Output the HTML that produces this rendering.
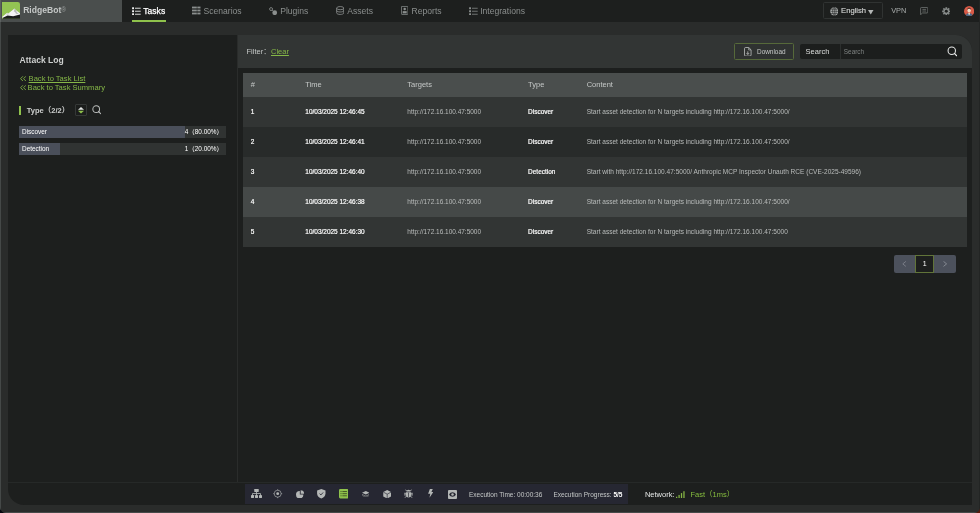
<!DOCTYPE html>
<html lang="en">
<head>
<meta charset="utf-8">
<title>RidgeBot - Attack Log</title>
<style>
*{box-sizing:border-box;margin:0;padding:0}
html,body{width:980px;height:513px;overflow:hidden;background:#2a2c2b}
body{position:relative;font-family:"Liberation Sans",sans-serif;color:#d6d8d7;-webkit-font-smoothing:antialiased}
.abs{position:absolute}
.t{position:absolute;white-space:nowrap;line-height:1}
/* window frame */
#win{will-change:transform;position:absolute;left:0;top:0;width:980px;height:513px;background:#2a2c2b;border-radius:0 0 6px 6px;overflow:hidden}
#edgeL{position:absolute;left:0;top:0;width:1.2px;height:513px;background:linear-gradient(to bottom,#5d6160 0,#5d6160 22px,#454948 22px)}
#edgeR{position:absolute;left:979px;top:0;width:1px;height:513px;background:#232524}
#edgeB{position:absolute;left:0;top:512px;width:980px;height:1px;background:#464a49}
#cornerL{position:absolute;left:0;top:507px;width:6px;height:6px;background:#05080f}
#cornerR{position:absolute;left:974px;top:507px;width:6px;height:6px;background:#5a1a0c}
/* header */
#hdr{position:absolute;left:0;top:0;width:980px;height:22px;background:#1d1f1e}
#logo{position:absolute;left:0;top:0;width:121.5px;height:22px;background:#4a4e4d}
#logoimg{position:absolute;left:1.9px;top:1.9px;width:18px;height:17px}
#brand{left:23.2px;top:5.7px;font-size:8.57px;font-weight:bold;color:#c5c8c7}
.nav{font-size:8.57px;color:#8b8f8e;top:6.6px}
.nav.on{color:#fff;-webkit-text-stroke:0.25px #fff}
#uline{position:absolute;left:132px;top:20px;width:33.5px;height:2px;background:#8fc24c}
/* container */
#box{position:absolute;left:8px;top:35px;width:963.6px;height:469.6px;background:#1d1f1e;border-radius:0 16px 0 16px;overflow:hidden}
#vdiv{position:absolute;left:228.5px;top:0;width:1px;height:447.5px;background:#2a2c2b}
#hdiv{position:absolute;left:0;top:447px;width:964px;height:1px;background:#262928}
#fbar{position:absolute;left:228.6px;top:0;width:735.4px;height:33px;background:#323534}
/* left */
#ttl{left:11.5px;top:20.6px;font-size:8.57px;font-weight:bold;color:#cdcfce}
.lnk{font-size:7.58px;color:#85b747}
.lnk u{text-decoration-thickness:0.6px;text-underline-offset:0.8px}
.bar{position:absolute;left:11px;width:207px;height:12px;background:#303332}
.cj{font-family:"Liberation Sans","Noto Sans CJK SC",sans-serif}
.bar i{position:absolute;left:0;top:0;height:100%;background:#4a4f5a;display:block}
.bar span{position:absolute;top:2.9px;font-size:6.43px;color:#fff;line-height:1;white-space:nowrap}
/* table */
#tbl{position:absolute;left:234.5px;top:37.6px;width:724.4px}
.row{position:absolute;left:0;width:724.4px;height:30px}
.row span{top:12.3px;position:absolute;white-space:nowrap;line-height:1;font-size:6.48px}
.c1{left:8.3px;color:#fff;-webkit-text-stroke:0.18px #fff}
.c2{left:62.8px;color:#fff;-webkit-text-stroke:0.18px #fff}
.c3{left:164.8px;color:#b9bcbb}
.c4{left:285.6px;color:#fff;-webkit-text-stroke:0.18px #fff}
.c5{left:344.2px;color:#b9bcbb;font-size:6.54px !important}
#th{position:absolute;left:0;top:0;width:724.4px;height:24.4px;background:#4a4e4d}
#th span{position:absolute;white-space:nowrap;line-height:1;font-size:7.5px;color:#c5c8c7;top:8.2px}
#pg{position:absolute;left:885.8px;top:220.2px;width:62.2px;height:17.6px;background:#4c515c;border-radius:2px}
#pgc{position:absolute;left:21.2px;top:0;width:19.1px;height:17.6px;background:#1d1f1e;border:1px solid #617439}
.bt{font-size:6.5px;color:#c5c8c7}
.bt b{color:#fff}
</style>
</head>
<body>
<div id="cornerL"></div><div id="cornerR"></div>
<div id="win">
  <div id="hdr">
    <div id="logo">
      <svg id="logoimg" viewBox="0 0 180 170">
        <path d="M0 0H158A22 22 0 0 1 180 22V168H0z" fill="#93c353"/>
        <path d="M0 150 L52 108 L62 114 L126 66 L138 80 L180 113 V150 L8 160z" fill="#f4f4f4"/>
        <path d="M126 66 L138 80 L150 104 L168 120 L140 118 L128 96 L118 100z" fill="#a9adac" opacity="0.8"/>
        <path d="M52 108 L62 114 L84 120 L60 128 L40 134z" fill="#c9cbca" opacity="0.7"/>
        <path d="M4 160 L56 136 L112 142 L180 126 V168 H12z" fill="#1a1c1b"/>
      </svg>
      <div class="t" id="brand">RidgeBot<span style="font-size:6.6px;vertical-align:1px;font-weight:normal;color:#9a9e9d">®</span></div>
    </div>
    <div class="t nav on" style="left:143.3px">Tasks</div>
    <div class="t nav" style="left:203.5px">Scenarios</div>
    <div class="t nav" style="left:280.2px">Plugins</div>
    <div class="t nav" style="left:347.3px">Assets</div>
    <div class="t nav" style="left:411.6px">Reports</div>
    <div class="t nav" style="left:480.2px">Integrations</div>

    <!-- nav icons -->
    <svg class="abs" style="left:132px;top:6.6px;width:8.8px;height:8.6px" viewBox="0 0 17.6 17.2"><g fill="#f2f2f2"><rect x="0.2" y="0.6" width="3.8" height="3.8"/><rect x="0.2" y="6.6" width="3.8" height="3.8"/><rect x="0.2" y="12.6" width="3.8" height="3.8"/></g><g fill="#c9cbca"><rect x="6" y="1.4" width="11.4" height="2.2"/><rect x="6" y="7.4" width="11.4" height="2.2"/><rect x="6" y="13.4" width="11.4" height="2.2"/></g></svg>
    <svg class="abs" style="left:192.4px;top:6.4px;width:8.6px;height:9px" viewBox="0 0 17.2 18"><g fill="#8b8f8e"><rect x="0" y="1.2" width="9.6" height="3.6"/><rect x="10.6" y="1.2" width="6.4" height="3.6"/><rect x="0" y="7.2" width="9.6" height="3.6"/><rect x="10.6" y="7.2" width="6.4" height="3.6"/><rect x="0" y="13.2" width="9.6" height="3.6"/><rect x="10.6" y="13.2" width="6.4" height="3.6"/></g></svg>
    <svg class="abs" style="left:269.4px;top:7px;width:8.4px;height:8.4px" viewBox="0 0 17 17"><g fill="none" stroke="#7f8382" stroke-width="1.9"><circle cx="4.2" cy="4.2" r="3"/><path d="M6.4 6.4L9 9"/></g><circle cx="11.6" cy="11.6" r="4.8" fill="#8b8f8e"/></svg>
    <svg class="abs" style="left:336px;top:6.4px;width:8.4px;height:9px" viewBox="0 0 17 18"><g fill="none" stroke="#8b8f8e" stroke-width="1.7"><ellipse cx="8.5" cy="4.2" rx="7.2" ry="3.2"/><path d="M1.3 4.2 V13.8 C1.3 18 15.7 18 15.7 13.8 V4.2"/><path d="M1.3 9 C1.3 13 15.7 13 15.7 9"/></g></svg>
    <svg class="abs" style="left:401px;top:6.4px;width:7.4px;height:8.8px" viewBox="0 0 15 18"><rect x="0.8" y="0.8" width="13.4" height="16.4" rx="1.2" fill="none" stroke="#8b8f8e" stroke-width="1.6"/><rect x="3.4" y="10.5" width="8.2" height="4.5" fill="#8b8f8e"/><circle cx="7.5" cy="6" r="2.6" fill="#8b8f8e"/></svg>
    <svg class="abs" style="left:469px;top:6.6px;width:8.8px;height:8.6px" viewBox="0 0 17.6 17.2"><g fill="#8b8f8e"><rect x="0.2" y="0.6" width="3.8" height="3.8"/><rect x="0.2" y="6.6" width="3.8" height="3.8"/><rect x="0.2" y="12.6" width="3.8" height="3.8"/></g><g fill="#6f7372"><rect x="6" y="1.5" width="11.4" height="2"/><rect x="6" y="7.5" width="11.4" height="2"/><rect x="6" y="13.5" width="11.4" height="2"/></g></svg>
    <!-- right controls -->
    <div class="abs" style="left:823px;top:2px;width:60px;height:17px;border:1px solid #303332;border-radius:1.5px"></div>
    <svg class="abs" style="left:829.7px;top:6.9px;width:8.7px;height:8.7px" viewBox="0 0 18 18"><circle cx="9" cy="9" r="8.6" fill="#aeb1b0"/><g fill="none" stroke="#1d1f1e" stroke-width="1.1"><ellipse cx="9" cy="9" rx="3.8" ry="8.4"/><path d="M0.6 9H17.4M1.8 4.6H16.2M1.8 13.4H16.2M9 0.5V17.5"/></g></svg>
    <div class="t" style="left:841.1px;top:6.9px;font-size:7.62px;color:#d0d2d1;-webkit-text-stroke:0.15px #d0d2d1">English</div>
    <svg class="abs" style="left:868.1px;top:10.4px;width:5.5px;height:4.6px" viewBox="0 0 10 8"><path d="M0 0H10L5 8z" fill="#b4b7b6"/></svg>
    <div class="t" style="left:891.2px;top:7.1px;font-size:7.4px;color:#a9adac">VPN</div>
    <svg class="abs" style="left:920px;top:7.1px;width:8.4px;height:8.2px" viewBox="0 0 17 17"><path d="M2.6 1H14.4A1.6 1.6 0 0 1 16 2.6V10.8A1.6 1.6 0 0 1 14.4 12.4H5L1 16V2.6A1.6 1.6 0 0 1 2.6 1z" fill="none" stroke="#7b7f7e" stroke-width="1.5" stroke-linejoin="round"/><path d="M4.8 5H12.2M4.8 8.4H12.2" stroke="#7b7f7e" stroke-width="1.4"/></svg>
    <svg class="abs" style="left:941.7px;top:6.8px;width:8.6px;height:8.6px" viewBox="0 0 18 18"><g stroke="#858988" stroke-width="3.6" stroke-linecap="butt"><path d="M9 0.3V17.7M0.3 9H17.7M2.85 2.85L15.15 15.15M15.15 2.85L2.85 15.15"/></g><circle cx="9" cy="9" r="6" fill="#858988"/><circle cx="9" cy="9" r="3.1" fill="#1d1f1e"/></svg>
    <svg class="abs" style="left:964.1px;top:5.6px;width:10.3px;height:10.3px" viewBox="0 0 20 20"><defs><clipPath id="av"><circle cx="10" cy="10" r="10"/></clipPath></defs><g clip-path="url(#av)"><rect width="20" height="20" fill="#d85a47"/><path d="M3 20C3 15 7 14 10 14S17 15 17 20z" fill="#4a6a8a"/><path d="M8.4 13H11.6V16L10 17.5L8.4 16z" fill="#f2d9c4"/><ellipse cx="10" cy="8.6" rx="3.3" ry="4" fill="#f2d9c4"/><path d="M6.4 8C6 4 8 3.2 10 3.2S14 4 13.6 8C13 6 12 5.4 10 5.4S7 6 6.4 8z" fill="#3a2a22"/></g></svg>
    <div id="uline"></div>
  </div>

  <div id="box">
    <div id="fbar"></div>
    <div id="vdiv"></div>
    <div id="hdiv"></div>

    <!-- left panel -->
    <div class="t" id="ttl">Attack Log</div>
    <svg class="abs" style="left:12px;top:40.7px;width:6.4px;height:5.4px" viewBox="0 0 13 11"><path d="M6 0.6L1.2 5.5L6 10.4M12 0.6L7.2 5.5L12 10.4" fill="none" stroke="#85b747" stroke-width="1.8"/></svg>
    <div class="t lnk" style="left:20.6px;top:40px"><u>Back to Task List</u></div>
    <svg class="abs" style="left:12px;top:50.2px;width:6.4px;height:5.4px" viewBox="0 0 13 11"><path d="M6 0.6L1.2 5.5L6 10.4M12 0.6L7.2 5.5L12 10.4" fill="none" stroke="#85b747" stroke-width="1.8"/></svg>
    <div class="t lnk" style="left:19.6px;top:49.4px">Back to Task Summary</div>
    <div class="abs" style="left:11px;top:71px;width:2.2px;height:8.8px;background:#8fc24c"></div>
    <div class="t cj" style="left:18.8px;top:71.6px;font-size:7.5px;font-weight:bold;color:#cfd1d0">Type（2/2）</div>
    <div class="bar" style="top:91px"><i style="width:80%"></i><span style="left:3px">Discover</span><span class="cj" style="right:3px">4（80.00%）</span></div>
    <div class="bar" style="top:108px"><i style="width:20%"></i><span style="left:3px">Detection</span><span class="cj" style="right:3px">1（20.00%）</span></div>

    <!-- right: filter -->
    <div class="t cj" style="left:238.5px;top:13px;font-size:7.5px;color:#c5c8c7">Filter：</div>
    <div class="t" style="left:263px;top:13px;font-size:7.5px;color:#85b747;text-decoration:underline;text-decoration-thickness:0.6px;text-underline-offset:0.8px">Clear</div>


    <!-- type filter controls -->
    <div class="abs" style="left:67.1px;top:68.9px;width:11.6px;height:12px;border:1px solid #353837;border-radius:1px;background:#1b1d1c"></div>
    <svg class="abs" style="left:70.0px;top:72.0px;width:6px;height:6.6px" viewBox="0 0 12 13"><path d="M6 0L12 5.6H0z" fill="#e6e8e7"/><path d="M6 13L12 7.4H0z" fill="#8fc24c"/></svg>
    <svg class="abs" style="left:83.9px;top:70.4px;width:9.3px;height:9.3px" viewBox="0 0 20 20"><circle cx="9" cy="9" r="7.2" fill="none" stroke="#b9bcbb" stroke-width="2.2"/><path d="M14.2 14.2L18.6 18.6" stroke="#b9bcbb" stroke-width="2.4" stroke-linecap="round"/></svg>

    <!-- download + search -->
    <div class="abs" style="left:726.1px;top:8.2px;width:60.4px;height:16.7px;border:1px solid #56693a;border-radius:1.5px;background:#2f3231"></div>
    <svg class="abs" style="left:736.2px;top:11.8px;width:7.6px;height:9.6px" viewBox="0 0 15 19"><path d="M1 3.2A2.2 2.2 0 0 1 3.2 1H9.4L14 5.6V15.8A2.2 2.2 0 0 1 11.8 18H3.2A2.2 2.2 0 0 1 1 15.8z" fill="none" stroke="#c5c8c7" stroke-width="1.5" stroke-linejoin="round"/><path d="M9.2 1.4V5.8H13.6" fill="none" stroke="#c5c8c7" stroke-width="1.3"/><path d="M7.5 8.6V14.6M4.9 12L7.5 14.8L10.1 12" fill="none" stroke="#c5c8c7" stroke-width="1.5"/></svg>
    <div class="t" style="left:749.0px;top:13.6px;font-size:6.43px;color:#c5c8c7">Download</div>
    <div class="abs" style="left:792.2px;top:9.1px;width:162px;height:15px;background:#1c1e1d;border-radius:2px"></div>
    <div class="abs" style="left:832.0px;top:9.1px;width:0.7px;height:15px;background:#2c2f2e"></div>
    <div class="t" style="left:797.6px;top:12.8px;font-size:7.5px;color:#dcdedd">Search</div>
    <div class="t" style="left:835.8px;top:13.9px;font-size:6.43px;color:#7f8382">Search</div>
    <svg class="abs" style="left:938.6px;top:11.2px;width:10.6px;height:10.6px" viewBox="0 0 20 20"><circle cx="9" cy="9" r="7" fill="none" stroke="#e6e8e7" stroke-width="2"/><path d="M14.2 14.2L18.4 18.4" stroke="#e6e8e7" stroke-width="2.2" stroke-linecap="round"/></svg>

    <!-- bottom toolbar -->
    <div class="abs" style="left:237.4px;top:449.0px;width:382.8px;height:20px;background:#262732"></div>

    <!-- toolbar icons -->
    <svg class="abs" style="left:242.8px;top:454.4px;width:11px;height:9px" viewBox="0 0 22 18"><g fill="#b4b7b6"><rect x="6.5" y="0" width="9" height="6" rx="0.8"/><rect x="0" y="12" width="6" height="6" rx="0.8"/><rect x="8" y="12" width="6" height="6" rx="0.8"/><rect x="16" y="12" width="6" height="6" rx="0.8"/></g><path d="M11 6V12M3 12V9H19V12" fill="none" stroke="#b4b7b6" stroke-width="1.6"/></svg>
    <svg class="abs" style="left:265.2px;top:454.3px;width:9.4px;height:9.4px" viewBox="0 0 20 20"><circle cx="10" cy="10" r="7.4" fill="none" stroke="#b4b7b6" stroke-width="1.3"/><circle cx="10" cy="10" r="3" fill="#b4b7b6"/><path d="M10 0.4V3M10 17V19.6M0.4 10H3M17 10H19.6" stroke="#b4b7b6" stroke-width="1.3"/></svg>
    <svg class="abs" style="left:287.7px;top:454.8px;width:8.4px;height:8.4px" viewBox="0 0 18 18"><path d="M8.2 2.2A7.9 7.9 0 1 0 15.8 9.8H8.2z" fill="#b4b7b6"/><path d="M10 0.4A7.6 7.6 0 0 1 17.6 8H10z" fill="#b4b7b6"/></svg>
    <svg class="abs" style="left:309.3px;top:454.3px;width:8.6px;height:9.4px" viewBox="0 0 17 19"><path d="M8.5 0L17 3V9C17 14 13 17.6 8.5 19C4 17.6 0 14 0 9V3z" fill="#b4b7b6"/><path d="M5 9.4L7.8 12L12.2 7" fill="none" stroke="#262732" stroke-width="1.7"/></svg>
    <svg class="abs" style="left:330.7px;top:454.4px;width:9.4px;height:9.4px" viewBox="0 0 19 19"><rect width="19" height="19" rx="2.6" fill="#8fc24c"/><g fill="#3d4f22"><rect x="3" y="4.3" width="2.2" height="1.8"/><rect x="6.8" y="4.3" width="9.2" height="1.8"/><rect x="3" y="8.6" width="2.2" height="1.8"/><rect x="6.8" y="8.6" width="9.2" height="1.8"/><rect x="3" y="12.9" width="2.2" height="1.8"/><rect x="6.8" y="12.9" width="9.2" height="1.8"/></g></svg>
    <svg class="abs" style="left:353.6px;top:456.0px;width:7.6px;height:6.4px" viewBox="0 0 19 16"><path d="M9.5 0L19 4.4L9.5 8.8L0 4.4z" fill="#b4b7b6"/><path d="M0 7.4L9.5 11.8L19 7.4V9.4L9.5 13.8L0 9.4z" fill="#8d908f"/><path d="M0 10.6L9.5 15L19 10.6V11.6L9.5 16L0 11.6z" fill="#8d908f"/></svg>
    <svg class="abs" style="left:374.8px;top:454.8px;width:8.4px;height:8.6px" viewBox="0 0 17 17"><path d="M8.5 0L16.5 4V13L8.5 17L0.5 13V4z" fill="#b4b7b6"/><path d="M0.8 4.2L8.5 8.2L16.2 4.2M8.5 8.2V17" fill="none" stroke="#262732" stroke-width="1.3"/></svg>
    <svg class="abs" style="left:396.3px;top:454.4px;width:9px;height:9.2px" viewBox="0 0 18 18"><g fill="#b4b7b6"><path d="M5.2 5A3.8 3.8 0 0 1 12.8 5z"/><path d="M4 6.2H14V11.6A5 5 0 0 1 4 11.6z"/></g><path d="M4.2 8.4H0.4M4.2 11.6H0.2M13.8 8.4H17.6M13.8 11.6H17.8M5 14L2 17.2M13 14L16 17.2M5.6 4.4L3.2 1.2M12.4 4.4L14.8 1.2" stroke="#b4b7b6" stroke-width="1.9" fill="none"/><path d="M9 7V16.4" stroke="#262732" stroke-width="1.3"/></svg>
    <svg class="abs" style="left:419.8px;top:454.3px;width:5.4px;height:8.8px" viewBox="0 0 10 17"><path d="M3.4 0H9L6.4 5.8H10L2.6 17L4.2 9H0z" fill="#b4b7b6"/></svg>
    <svg class="abs" style="left:439.6px;top:454.6px;width:9px;height:9px" viewBox="0 0 18 18"><rect width="18" height="18" rx="1.8" fill="#b4b7b6"/><path d="M2.2 9C5 3.2 13 3.2 15.8 9C13 14.8 5 14.8 2.2 9z" fill="#262732"/><circle cx="9" cy="9" r="2.5" fill="#b4b7b6"/></svg>
    <div class="t bt" style="left:461.0px;top:456.5px">Execution Time: 00:00:36</div>
    <div class="t bt" style="left:545.4px;top:456.5px">Execution Progress: <b>5/5</b></div>
    <div class="t" style="left:636.9px;top:456.0px;font-size:7.5px;color:#e6e8e7">Network:</div>
    <svg class="abs" style="left:668.2px;top:455.6px;width:8.8px;height:7.4px" viewBox="0 0 18 15"><g fill="#86b545"><rect x="0" y="11.6" width="2.6" height="3.4"/><rect x="5" y="8" width="2.6" height="7"/><rect x="10" y="4.2" width="2.6" height="10.8"/><rect x="15" y="0.4" width="2.6" height="14.6"/></g></svg>
    <div class="t" style="left:682.5px;top:456.0px;font-size:7.5px;color:#86bd3e;font-family:'Liberation Sans','Noto Sans CJK SC',sans-serif">Fast（1ms）</div>

    <!-- table -->
    <div id="tbl">
      <div id="th"><span style="left:8.3px">#</span><span style="left:62.8px">Time</span><span style="left:164.8px">Targets</span><span style="left:285.6px">Type</span><span style="left:344.2px">Content</span></div>
      <div class="row" style="top:24.4px;background:#323534"><span class="c1">1</span><span class="c2">10/03/2025 12:46:45</span><span class="c3">http://172.16.100.47:5000</span><span class="c4">Discover</span><span class="c5">Start asset detection for N targets including http://172.16.100.47:5000/</span></div>
      <div class="row" style="top:54.4px;background:#282b2a"><span class="c1">2</span><span class="c2">10/03/2025 12:46:41</span><span class="c3">http://172.16.100.47:5000</span><span class="c4">Discover</span><span class="c5">Start asset detection for N targets including http://172.16.100.47:5000/</span></div>
      <div class="row" style="top:84.4px;background:#323534"><span class="c1">3</span><span class="c2">10/03/2025 12:46:40</span><span class="c3">http://172.16.100.47:5000</span><span class="c4">Detection</span><span class="c5">Start with http://172.16.100.47:5000/ Anthropic MCP Inspector Unauth RCE (CVE-2025-49596)</span></div>
      <div class="row" style="top:114.4px;background:#454948"><span class="c1">4</span><span class="c2">10/03/2025 12:46:38</span><span class="c3">http://172.16.100.47:5000</span><span class="c4">Discover</span><span class="c5">Start asset detection for N targets including http://172.16.100.47:5000/</span></div>
      <div class="row" style="top:144.4px;background:#323534"><span class="c1">5</span><span class="c2">10/03/2025 12:46:30</span><span class="c3">http://172.16.100.47:5000</span><span class="c4">Discover</span><span class="c5">Start asset detection for N targets including http://172.16.100.47:5000</span></div>
    </div>

    <!-- pagination -->
    <div id="pg"><div id="pgc"></div><svg class="abs" style="left:8.6px;top:6px;width:4.4px;height:5.8px" viewBox="0 0 9 12"><path d="M8 0.8L1.6 6L8 11.2" fill="none" stroke="#8a8e97" stroke-width="1.5"/></svg><span class="t" style="left:28.9px;top:5.3px;font-size:7px;color:#fff">1</span><svg class="abs" style="left:49px;top:6px;width:4.4px;height:5.8px" viewBox="0 0 9 12"><path d="M1 0.8L7.4 6L1 11.2" fill="none" stroke="#9a9ea6" stroke-width="1.5"/></svg></div>
  </div>
  <div id="edgeL"></div><div id="edgeR"></div><div id="edgeB"></div>
</div>
</body>
</html>
